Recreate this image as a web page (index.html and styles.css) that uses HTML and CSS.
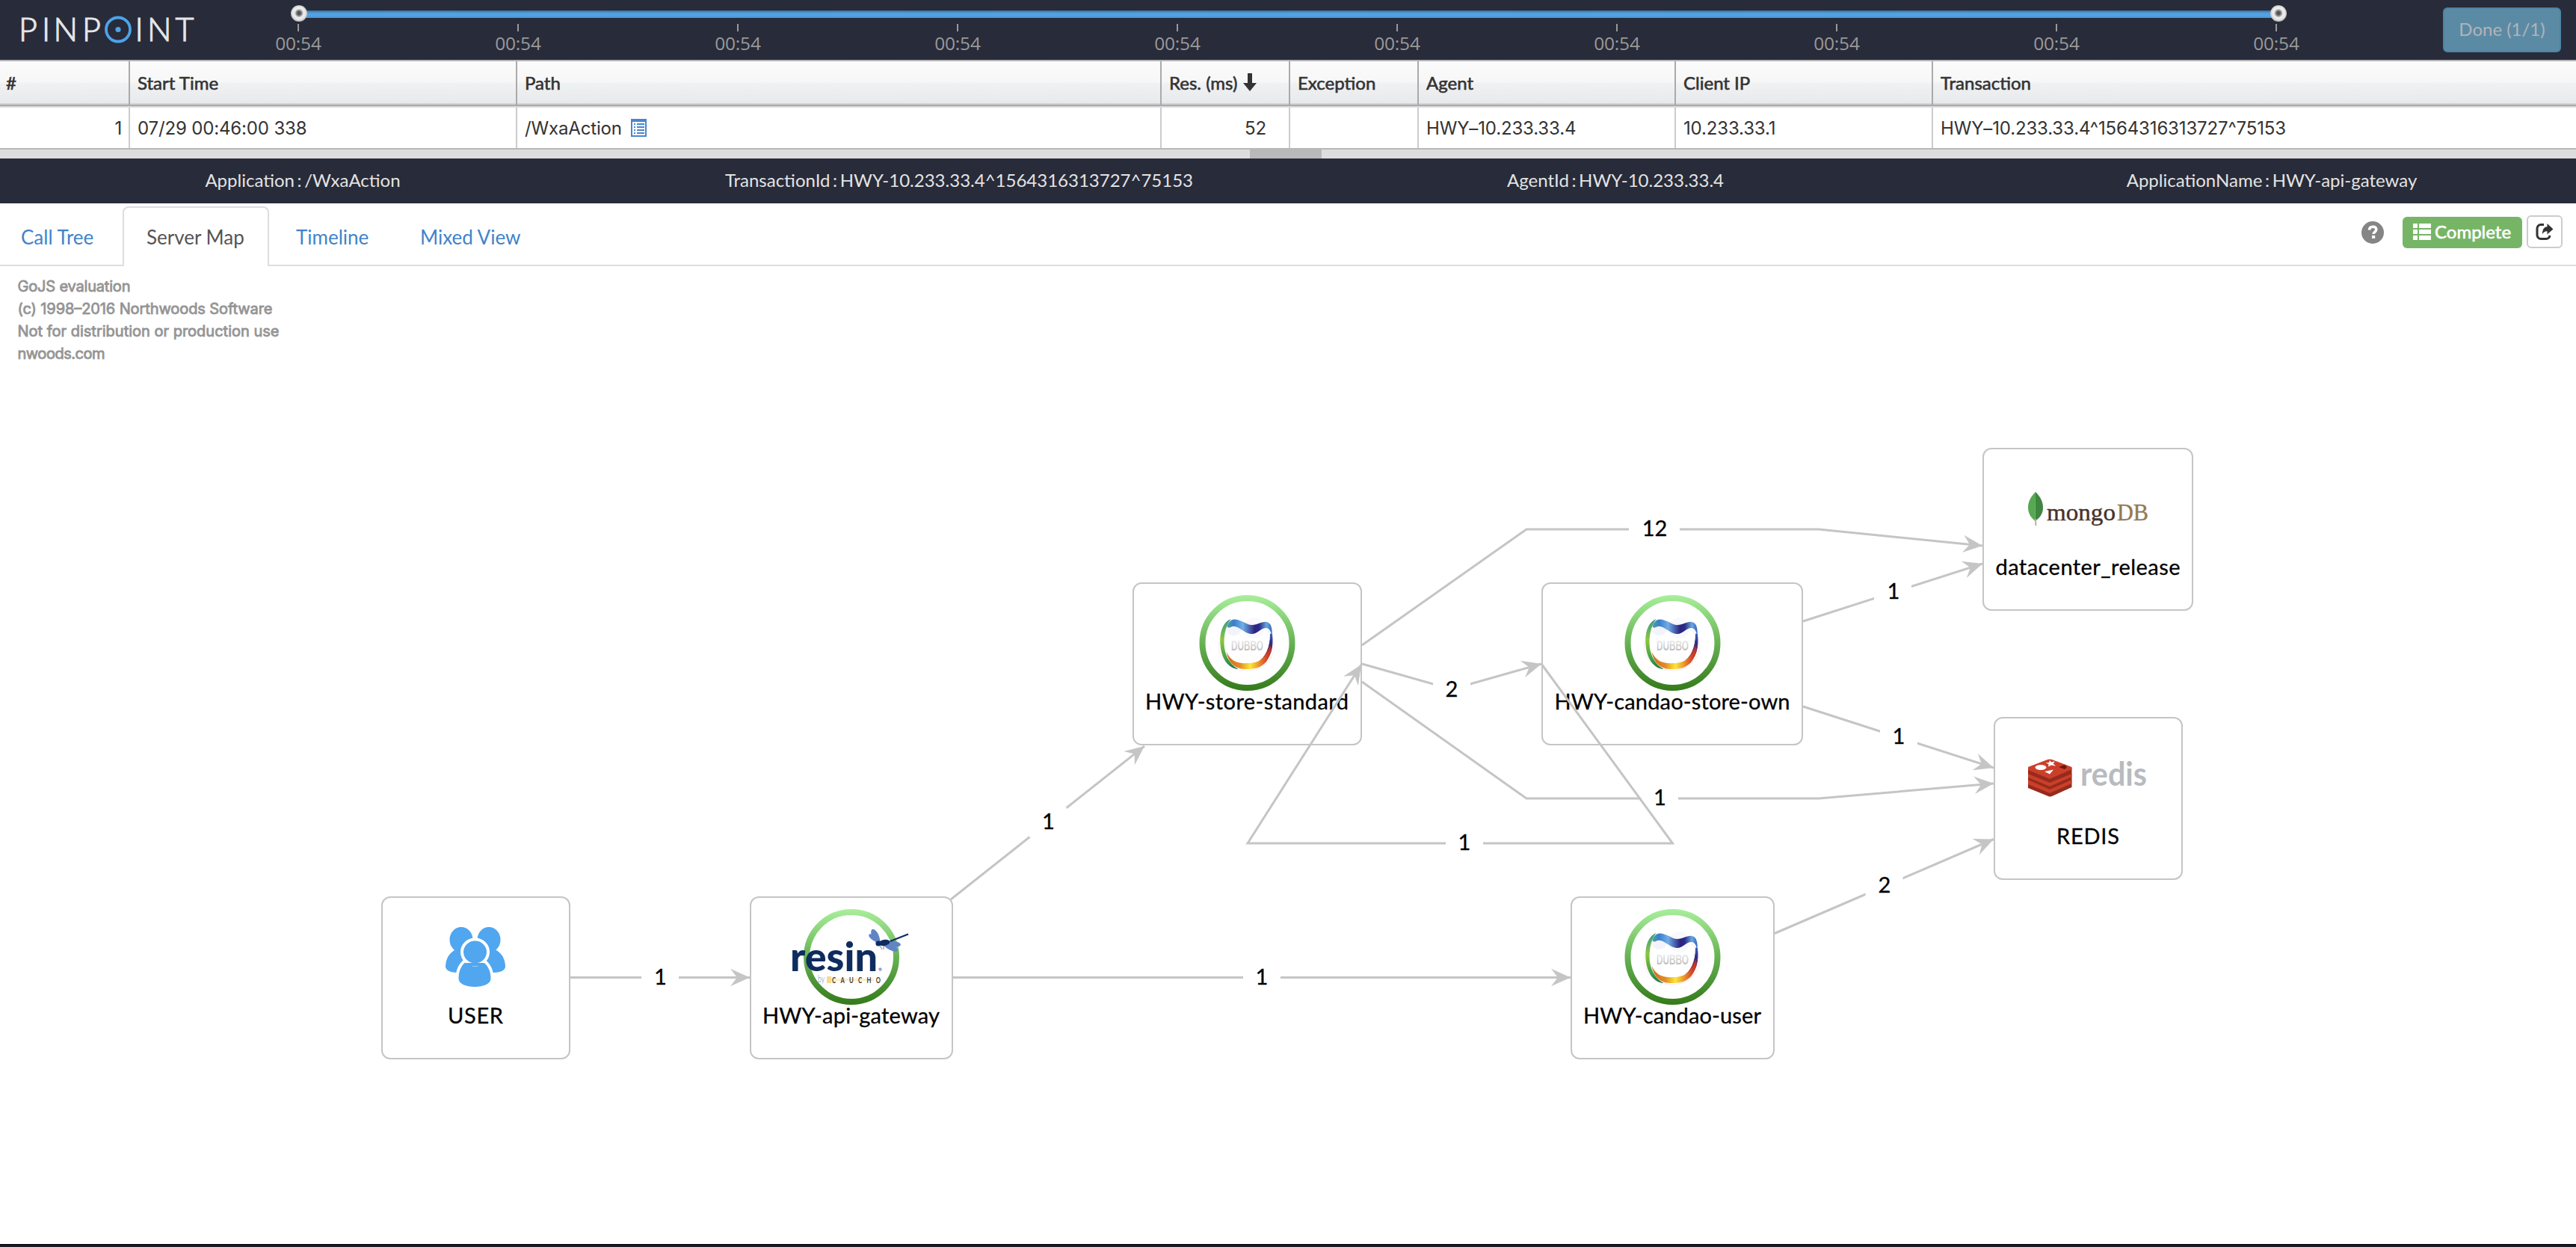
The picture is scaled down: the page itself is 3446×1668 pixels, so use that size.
FILE: index.html
```html
<!DOCTYPE html>
<html lang="en">
<head>
<meta charset="utf-8">
<title>Pinpoint - Transactions</title>
<link rel="stylesheet" href="styles.css">
</head>
<body>
<header class="topbar">
  <svg class="logo" viewBox="0 0 252 80" width="252" height="80">
    <text class="logo-text" x="25 56 71.500 110 180.500 197 234.500" y="55">PINPINT</text>
    <circle cx="158" cy="39.5" r="16" fill="none" stroke="#4ca3ea" stroke-width="3.8"/>
    <circle cx="158" cy="39.5" r="3.6" fill="#4ca3ea"/>
  </svg>
  <div class="slider">
    <div class="track"><i class="knob knob-start"></i><i class="knob knob-end"></i></div>
    <div class="ticks">
      <span>00:54</span><span>00:54</span><span>00:54</span><span>00:54</span><span>00:54</span><span>00:54</span><span>00:54</span><span>00:54</span><span>00:54</span><span>00:54</span>
    </div>
  </div>
  <button class="done">Done (1/1)</button>
</header>

<section class="grid">
  <div class="row head">
    <div>#</div><div>Start Time</div><div>Path</div>
    <div>Res. (ms)<svg class="sort" viewBox="0 0 18 24" width="18" height="24"><path d="M6 0h6v13h6l-9 11-9-11h6z" fill="#333"/></svg></div>
    <div>Exception</div><div>Agent</div><div>Client IP</div><div>Transaction</div>
  </div>
  <div class="row body">
    <div class="num">1</div>
    <div>07/29 00:46:00 338</div>
    <div>/WxaAction<svg class="list" viewBox="0 0 21 24" width="21" height="24"><path d="M0 0h21v24H0z" fill="#4a86cb"/><path d="M2 4h17v18H2z" fill="#fff"/><path d="M4 6h2v2H4zM8 6h10v2H8zM4 10h2v2H4zM8 10h10v2H8zM4 14h2v2H4zM8 14h10v2H8zM4 18h2v2H4zM8 18h10v2H8z" fill="#4a86cb"/></svg></div>
    <div class="num res">52</div>
    <div></div>
    <div>HWY–10.233.33.4</div>
    <div>10.233.33.1</div>
    <div>HWY–10.233.33.4^1564316313727^75153</div>
  </div>
</section>
<div class="splitter"><i></i></div>

<div class="info">
  <span>Application : /WxaAction</span>
  <span>TransactionId : HWY-10.233.33.4^1564316313727^75153</span>
  <span>AgentId : HWY-10.233.33.4</span>
  <span>ApplicationName : HWY-api-gateway</span>
</div>

<nav class="tabs">
  <a class="tab t1">Call Tree</a>
  <a class="tab active">Server Map</a>
  <a class="tab t3">Timeline</a>
  <a class="tab">Mixed View</a>
  <div class="tools">
    <svg class="help" viewBox="0 0 30 30" width="30" height="30"><circle cx="15" cy="15" r="15" fill="#858585"/><path d="M10.500 11.600c.2-3 2-4.400 4.700-4.400 2.800 0 4.600 1.500 4.600 3.900 0 3.300-3.700 3.200-3.700 6" fill="none" stroke="#fff" stroke-width="3.600"/><rect x="14" y="19" width="4.200" height="4" fill="#fff"/></svg>
    <button class="complete"><svg viewBox="0 0 24 22" width="24" height="22"><path d="M0 0h6v6H0zM8 0h16v6H8zM0 8h6v6H0zM8 8h16v6H8zM0 16h6v6H0zM8 16h16v6H8z" fill="#fff"/></svg>Complete</button>
    <button class="share"><svg viewBox="0 0 24 24" width="24" height="24"><path d="M11 2.500H7A5 5 0 0 0 2 7.500v9a5 5 0 0 0 5 5h7a5 5 0 0 0 5-4.500" fill="none" stroke="#333" stroke-width="3"/><path d="M15.500 1l8 7.500-8 7v-4.200c-3.200 0-5 1.200-6.500 4 0-6 2-9.800 6.500-10z" fill="#333"/></svg></button>
  </div>
</nav>

<main class="map">
<svg viewBox="0 356 3446 1308" width="3446" height="1308">
  <defs>
    <linearGradient id="ring" x1="0" y1="-64" x2="0" y2="64" gradientUnits="userSpaceOnUse"><stop offset="0" stop-color="#a9ef9b"/><stop offset=".5" stop-color="#67b254"/><stop offset="1" stop-color="#347a1b"/></linearGradient>
    <linearGradient id="dtop" x1="-27" y1="0" x2="33" y2="0" gradientUnits="userSpaceOnUse"><stop offset="0" stop-color="#4ba29a"/><stop offset=".15" stop-color="#3a7fcc"/><stop offset=".35" stop-color="#70aee5"/><stop offset=".62" stop-color="#2b2380"/><stop offset=".72" stop-color="#2b2b88"/><stop offset=".88" stop-color="#68a8e0"/><stop offset="1" stop-color="#3468c0"/></linearGradient>
    <linearGradient id="dleft" x1="0" y1="-30" x2="0" y2="34" gradientUnits="userSpaceOnUse"><stop offset="0" stop-color="#3d9c87"/><stop offset=".4" stop-color="#8cc63e"/><stop offset=".8" stop-color="#3fa04a"/><stop offset="1" stop-color="#1f7a48"/></linearGradient>
    <linearGradient id="dright" x1="0" y1="-20" x2="0" y2="26" gradientUnits="userSpaceOnUse"><stop offset="0" stop-color="#3f77cb"/><stop offset=".45" stop-color="#2a2785"/><stop offset=".7" stop-color="#a82c30"/><stop offset="1" stop-color="#e0572c"/></linearGradient>
    <linearGradient id="dbot" x1="-28" y1="0" x2="33" y2="0" gradientUnits="userSpaceOnUse"><stop offset="0" stop-color="#cf6a22"/><stop offset=".3" stop-color="#e58b24"/><stop offset=".52" stop-color="#fbe63a"/><stop offset=".7" stop-color="#ee9a2b"/><stop offset=".9" stop-color="#d0402a"/><stop offset="1" stop-color="#b5302b"/></linearGradient>
    <linearGradient id="dtext" x1="0" y1="-4" x2="0" y2="11" gradientUnits="userSpaceOnUse"><stop offset="0" stop-color="#eee"/><stop offset="1" stop-color="#bbb"/></linearGradient>
    <g id="dubbo">
      <circle r="60" fill="#fff" stroke="url(#ring)" stroke-width="8"/>
      <circle cx="-18" cy="-21" r="11" fill="#f3f4fb"/><circle cx="9" cy="-20" r="14" fill="#f8f9fd"/>
      <ellipse cx="-1" cy="5" rx="37" ry="32" fill="none" stroke="#fdf3f3" stroke-width="2"/>
      <path d="M-22-32C-34-27-37-12-36 2c1 18 10 32 24 33C-24 29-31 14-31 0c0-16 4-25 9-32z" fill="url(#dleft)"/>
      <path d="M33-12c2 20-2 32-13 40l-6-2C25 19 31 6 31-12z" fill="url(#dright)" stroke="url(#dright)"/>
      <path d="M-28 12C-22 24-14 28 2 27c16 0 25-9 29-24 2 17-8 32-29 32-16 1-26-5-30-23z" fill="url(#dbot)"/>
      <path d="M-27-22C-25-30-19-33-13-31-5-29 0-24 6-24c9 0 13-5 20-4 6 1 8 9 7 20-1-8-4-12-8-12C18-20 13-11 5-12-5-13-12-24-20-22c-3 1-5 3-7 0z" fill="url(#dtop)"/>
      <text class="dubbo-text" x="0" y="10" textLength="43" lengthAdjust="spacingAndGlyphs" fill="url(#dtext)">DUBBO</text>
    </g>
    <path id="arrow" d="M0 0L-26-11.700L-17 0L-26 11.700z"/>
  </defs>

  <g class="watermark">
    <text x="23.500" y="389.500" textLength="151">GoJS evaluation</text>
    <text x="23.500" y="419.500" textLength="341">(c) 1998–2016 Northwoods Software</text>
    <text x="23.500" y="449.500" textLength="350">Not for distribution or production use</text>
    <text x="23.500" y="479.500" textLength="117">nwoods.com</text>
  </g>

  <g class="node-box">
    <rect x="511" y="1200" width="251" height="216" rx="11"/>
    <rect x="1004" y="1200" width="270" height="216" rx="11"/>
    <rect x="1516" y="780" width="305" height="216" rx="11"/>
    <rect x="2063" y="780" width="348" height="216" rx="11"/>
    <rect x="2102" y="1200" width="271" height="216" rx="11"/>
    <rect x="2653" y="600" width="280" height="216" rx="11"/>
    <rect x="2668" y="960" width="251" height="216" rx="11"/>
  </g>

  <g transform="translate(596 1240)" fill="#50a6ef">
    <ellipse cx="21" cy="17" rx="15.500" ry="17"/><ellipse cx="58" cy="17" rx="15.500" ry="17"/>
    <path d="M14 30C5 34 0 43 0 53c0 5 7 8 16 8h48c9 0 16-3 16-8 0-10-5-19-14-23z"/>
    <g stroke="#fff" stroke-width="8" paint-order="stroke"><path d="M28 46C20 52 17.500 60 17.500 69c0 7 10 11 21.500 11s21.500-4 21.500-11c0-9-3-17-11-23z"/><ellipse cx="39.500" cy="33.500" rx="15.500" ry="15"/></g>
    <path d="M28 48h23v4H28z"/>
    <path d="M12 81h55v8H12z" fill="#fff"/>
  </g>

  <g transform="translate(1139 1280)">
    <circle r="60" fill="#fff" stroke="url(#ring)" stroke-width="8"/>
    <text class="resin" x="-82" y="19" textLength="117" lengthAdjust="spacingAndGlyphs">resin</text>
    <text x="36" y="19" class="reg">®</text>
    <text class="by" x="-45" y="34" textLength="9" lengthAdjust="spacingAndGlyphs">by</text>
    <path d="M-33 26h6v9h-6z" fill="#fbd98c"/><path d="M-27 29h57v3h-57z" fill="#fdeccc"/>
    <text class="caucho" transform="translate(-26 35) scale(.7 1)" textLength="93">CAUCHO</text>
    <g fill="#6184c5"><ellipse cx="32" cy="-28" rx="4.500" ry="10" transform="rotate(-25 32 -28)"/><ellipse cx="31" cy="-25" rx="3.500" ry="9" transform="rotate(-58 31 -25)"/><ellipse cx="55" cy="-17.500" rx="11" ry="4" transform="rotate(6 55 -17.500)"/><ellipse cx="52" cy="-13.500" rx="11" ry="4" transform="rotate(28 52 -13.500)"/></g>
    <path d="M76-30.500L52-21M48-20L37-17" fill="none" stroke="#0e2c5e" stroke-width="2.200"/><ellipse cx="44" cy="-19" rx="7.500" ry="4" transform="rotate(-10 44 -19)" fill="#0e2c5e"/><circle cx="36" cy="-18" r="3.600" fill="#0e2c5e"/><path d="M38-15l3 5M43-15v5" stroke="#6f7f9d" fill="none"/>
  </g>

  <use href="#dubbo" x="1668.500" y="860"/>
  <use href="#dubbo" x="2237.500" y="860"/>
  <use href="#dubbo" x="2237.500" y="1280"/>

  <g>
    <path d="M2723 658c-8 8-10 15-10 21 0 9 5 14 9.500 18z" fill="#56a851"/><path d="M2723 658c8 8 10 15 10 21 0 9-5 14-10.500 18z" fill="#3f8641"/><path d="M2722.200 694h1.600l.6 9h-2z" fill="#b9ad8c"/>
    <text class="mongo" x="2738" y="696" textLength="92" lengthAdjust="spacingAndGlyphs" fill="#46332a" stroke="#46332a">mongo</text>
    <text class="mongo" x="2832" y="696" textLength="42" lengthAdjust="spacingAndGlyphs" fill="#937a52" stroke="#937a52">DB</text>
  </g>
  <g transform="translate(2713 1015)">
    <path d="M0 12v27l27 11q2.500 1 5 0l26.500-12V12z" fill="#962b1c"/>
    <path d="M0 28l29 13 29.500-13v5L31 45q-2 1-4 0L0 34z" fill="#cb3f2a"/>
    <path d="M0 20l29 12 29.500-12v4L31 36q-2 1-4 0L0 25z" fill="#cb3f2a"/>
    <path d="M0 11l26-10q3-1 6 0l26.500 10v3L31 26q-2 1-4 0L0 15z" fill="#cb3f2a"/>
    <ellipse cx="17" cy="11.500" rx="7.500" ry="3.500" fill="#fff"/><path d="M29 2l2 2.500 5-1-2.500 3 3.500 3-6-1-4 2 .5-3.500-4-1.500 4.500-.5zM22 17l12-2.500-5 6z" fill="#fff"/><path d="M41 11l8-3v6zM49 8l3 3-3 3z" fill="#6d1810"/>
  </g>
  <text class="redis" x="2783" y="1050.500" textLength="89" lengthAdjust="spacingAndGlyphs">redis</text>

  <g class="node-name">
    <text x="636" y="1369" textLength="74">USER</text>
    <text x="1138.500" y="1369" textLength="237">HWY-api-gateway</text>
    <text x="1668" y="949" textLength="272">HWY-store-standard</text>
    <text x="2237" y="949" textLength="315">HWY-candao-store-own</text>
    <text x="2237" y="1369" textLength="238">HWY-candao-user</text>
    <text x="2793" y="769" textLength="247">datacenter_release</text>
    <text x="2793" y="1129" textLength="84">REDIS</text>
  </g>

  <g class="edge">
    <path d="M763 1307.500H1003"/>
    <path d="M1272 1203L1531 998"/>
    <path d="M1275 1307.500H2101"/>
    <path d="M1822 863L2042 708H2433L2652 730"/>
    <path d="M1822 888L1942 922L2062 888"/>
    <path d="M1822 912L2042 1068H2433L2667 1048"/>
    <path d="M2412 831L2652 754"/>
    <path d="M2412 945L2667 1027"/>
    <path d="M2374 1248.500L2667 1122.500"/>
  </g>
  <g fill="#fff">
    <rect x="858" y="1287" width="50" height="40"/><rect x="1377" y="1080" width="50" height="40"/><rect x="1663" y="1287" width="50" height="40"/><rect x="2179" y="688" width="68" height="40"/><rect x="1917" y="902" width="50" height="40"/><rect x="2195" y="1048" width="50" height="40"/><rect x="2507" y="772" width="50" height="40"/><rect x="2515" y="966" width="50" height="40"/><rect x="2495.500" y="1165" width="50" height="40"/>
  </g>
  <path class="edge" d="M1934 1128H1669L1821 889M2062 888L2237.500 1128H1984"/>
  <g fill="#c5c5c5">
    <use href="#arrow" transform="translate(1003 1307.500)"/>
    <use href="#arrow" transform="translate(1531 998) rotate(-38.400)"/>
    <use href="#arrow" transform="translate(2101 1307.500)"/>
    <use href="#arrow" transform="translate(2652 730) rotate(5.800)"/>
    <use href="#arrow" transform="translate(2062 888) rotate(-15.800)"/>
    <use href="#arrow" transform="translate(2667 1048) rotate(-4.900)"/>
    <use href="#arrow" transform="translate(2652 754) rotate(-17.800)"/>
    <use href="#arrow" transform="translate(2667 1027) rotate(17.800)"/>
    <use href="#arrow" transform="translate(2667 1122.500) rotate(-23.300)"/>
    <use href="#arrow" transform="translate(1821 889) rotate(-57.500)"/>
  </g>
  <g class="node-name">
    <text x="883.500" y="1317">1</text><text x="1402.500" y="1109">1</text><text x="1688" y="1317">1</text><text x="2213.500" y="717">12</text><text x="1942" y="932">2</text><text x="2220.500" y="1077">1</text><text x="1959" y="1137">1</text><text x="2533" y="801">1</text><text x="2540" y="995">1</text><text x="2521" y="1194">2</text>
  </g>
</svg>
</main>
<footer class="edge-strip"></footer>
</body>
</html>
```
FILE: styles.css
```css
* { box-sizing: border-box; }
body {
  margin: 0;
  width: 3446px;
  height: 1668px;
  overflow: hidden;
  background: #fff;
  color: #333;
  font-family: Lato, "Liberation Sans", sans-serif;
  font-size: 24px;
}
button { font: inherit; padding: 0; margin: 0; }
svg { display: block; flex: none; }

.topbar { display: flex; height: 80px; background: #282b39; }
.logo { overflow: visible; }
.logo-text { font: 300 43px Lato, sans-serif; fill: #e6e6ea; stroke: #e6e6ea; stroke-width: 1.1px; }
.slider { width: 2940px; padding-top: 14px; }
.track {
  position: relative;
  height: 10px;
  margin: 0 144px 0 148px;
  background: linear-gradient(#3d6c93, #509fe0 35%, #54a3e4 70%, #4a92cf);
}
.knob {
  position: absolute;
  top: -7px;
  width: 22px;
  height: 22px;
  border-radius: 50%;
  background: radial-gradient(circle at 50% 48%, #555 0 2px, #999 4px, #eee 6px, #e4e4e4 9px, #b5b5b5 11px);
}
.knob-start { left: -11px; }
.knob-end { right: -11px; }
.ticks { display: grid; grid-template-columns: repeat(10, 294px); margin-top: 8px; }
.ticks span {
  display: flex;
  flex-direction: column;
  align-items: center;
  color: #999;
  font: 24.5px/28px "Open Sans", "Noto Sans", sans-serif;
  letter-spacing: -.2px;
}
.ticks span::before { content: ""; width: 2px; height: 10px; margin-bottom: 2px; background: #999; }
.done {
  width: 158px;
  height: 60px;
  margin: 10px 0 0 76px;
  padding-bottom: 3px;
  border: 2px solid #4d84a2;
  border-radius: 6px;
  background: #5b8ba4;
  color: #b1b4ba;
  font-size: 24px;
}

.row {
  display: grid;
  grid-template-columns: 174px 518px 862px 172px 172px 344px 344px 1fr;
}
.row > div { display: flex; align-items: center; padding-left: 10px; border-right: 2px solid #ccc; }
.row > div:last-child { border-right: 0; }
.head {
  height: 64px;
  border-top: 2px solid #b5b5b5;
  border-bottom: 2px solid #ddd;
  box-shadow: inset 0 -2px #a8a8a8, inset 0 -4px #d2d3d5;
  background: linear-gradient(#fbfbfb, #f7f7f7 45%, #f0f1f3 50%, #e7e8ea);
  color: #333;
  -webkit-text-stroke: .6px #333;
}
.head > div { padding-bottom: 2px; border-color: #aaa; margin-bottom: 2px; }
.head > div:first-child { padding-left: 8px; }
.sort { margin-left: 8px; }
.body {
  height: 56px;
  border-bottom: 2px solid #b8b8b8;
  font-family: Inter, "Liberation Sans", sans-serif;
  font-size: 24px;
  letter-spacing: -.15px;
}
.body .num { justify-content: flex-end; padding-right: 9px; }
.body .res { padding-right: 30px; }
.list { margin-left: 12px; }

.splitter { height: 12px; background: #ddd; }
.splitter i { display: block; width: 96px; height: 12px; margin-left: 1672px; background: #b9b9b9; }

.info {
  display: grid;
  grid-template-columns: repeat(4, 878px);
  height: 60px;
  margin-right: -34px;
  padding-bottom: 4px;
  align-items: center;
  justify-items: center;
  background: #282b39;
  color: #e3e3e3;
  word-spacing: -2.5px;
}
.info span { margin-left: -68px; }

.tabs { display: flex; height: 84px; padding-top: 4px; border-bottom: 2px solid #ddd; font-size: 26px; }
.tab { height: 80px; padding: 21px 28px 0 32px; border: 2px solid transparent; border-bottom: 0; color: #4183ca; line-height: 36px; }
.tab.t1 { width: 164px; padding-left: 26px; }
.tab.active { width: 196px; padding-left: 30px; border-color: #ddd; border-radius: 8px 8px 0 0; background: #fff; color: #555; }
.tab.t3 { width: 168px; padding-left: 34px; }
.tools { display: flex; margin-left: auto; padding-right: 18px; }
.help { margin: 20px 25px 0 0; }
.complete {
  display: flex;
  align-items: center;
  gap: 5px;
  width: 160px;
  height: 42px;
  margin: 14px 6px 0 0;
  padding: 0 0 3px 14px;
  border: 0;
  border-radius: 6px;
  background: #77b566;
  color: #fff;
  font-size: 24px;
  -webkit-text-stroke: .6px #fff;
}
.share {
  display: flex;
  width: 48px;
  height: 44px;
  margin-top: 12px;
  align-items: center;
  justify-content: center;
  border: 2px solid #ccc;
  border-radius: 6px;
  background: #fff;
}

.map { height: 1308px; }
.watermark { font: 20px Inter, "Liberation Sans", sans-serif; fill: #949494; stroke: #949494; stroke-width: .8px; }
.node-box { fill: #fff; stroke: #c5c5c5; stroke-width: 2px; }
.node-name { font: 29px Lato, sans-serif; fill: #000; stroke: #000; stroke-width: .3px; text-anchor: middle; }
.edge { fill: none; stroke: #c5c5c5; stroke-width: 3px; }
.resin { font: 900 53px Lato, sans-serif; fill: #0e2c5e; }
.reg { font: 6px Lato, sans-serif; fill: #0e2c5e; }
.by { font: 300 14px Lato, sans-serif; fill: #6184c5; }
.caucho { font: 700 11px Lato, sans-serif; fill: #4a3a1c; }
.dubbo-text { font: 700 19px "Liberation Sans", sans-serif; text-anchor: middle; }
.mongo { font: 31px "Liberation Serif", serif; stroke-width: .4px; }
.redis { font: 700 44px Lato, sans-serif; fill: #b8bbbf; }
.edge-strip { height: 4px; background: #1d1926; border-top: 1px solid #000; }
```
